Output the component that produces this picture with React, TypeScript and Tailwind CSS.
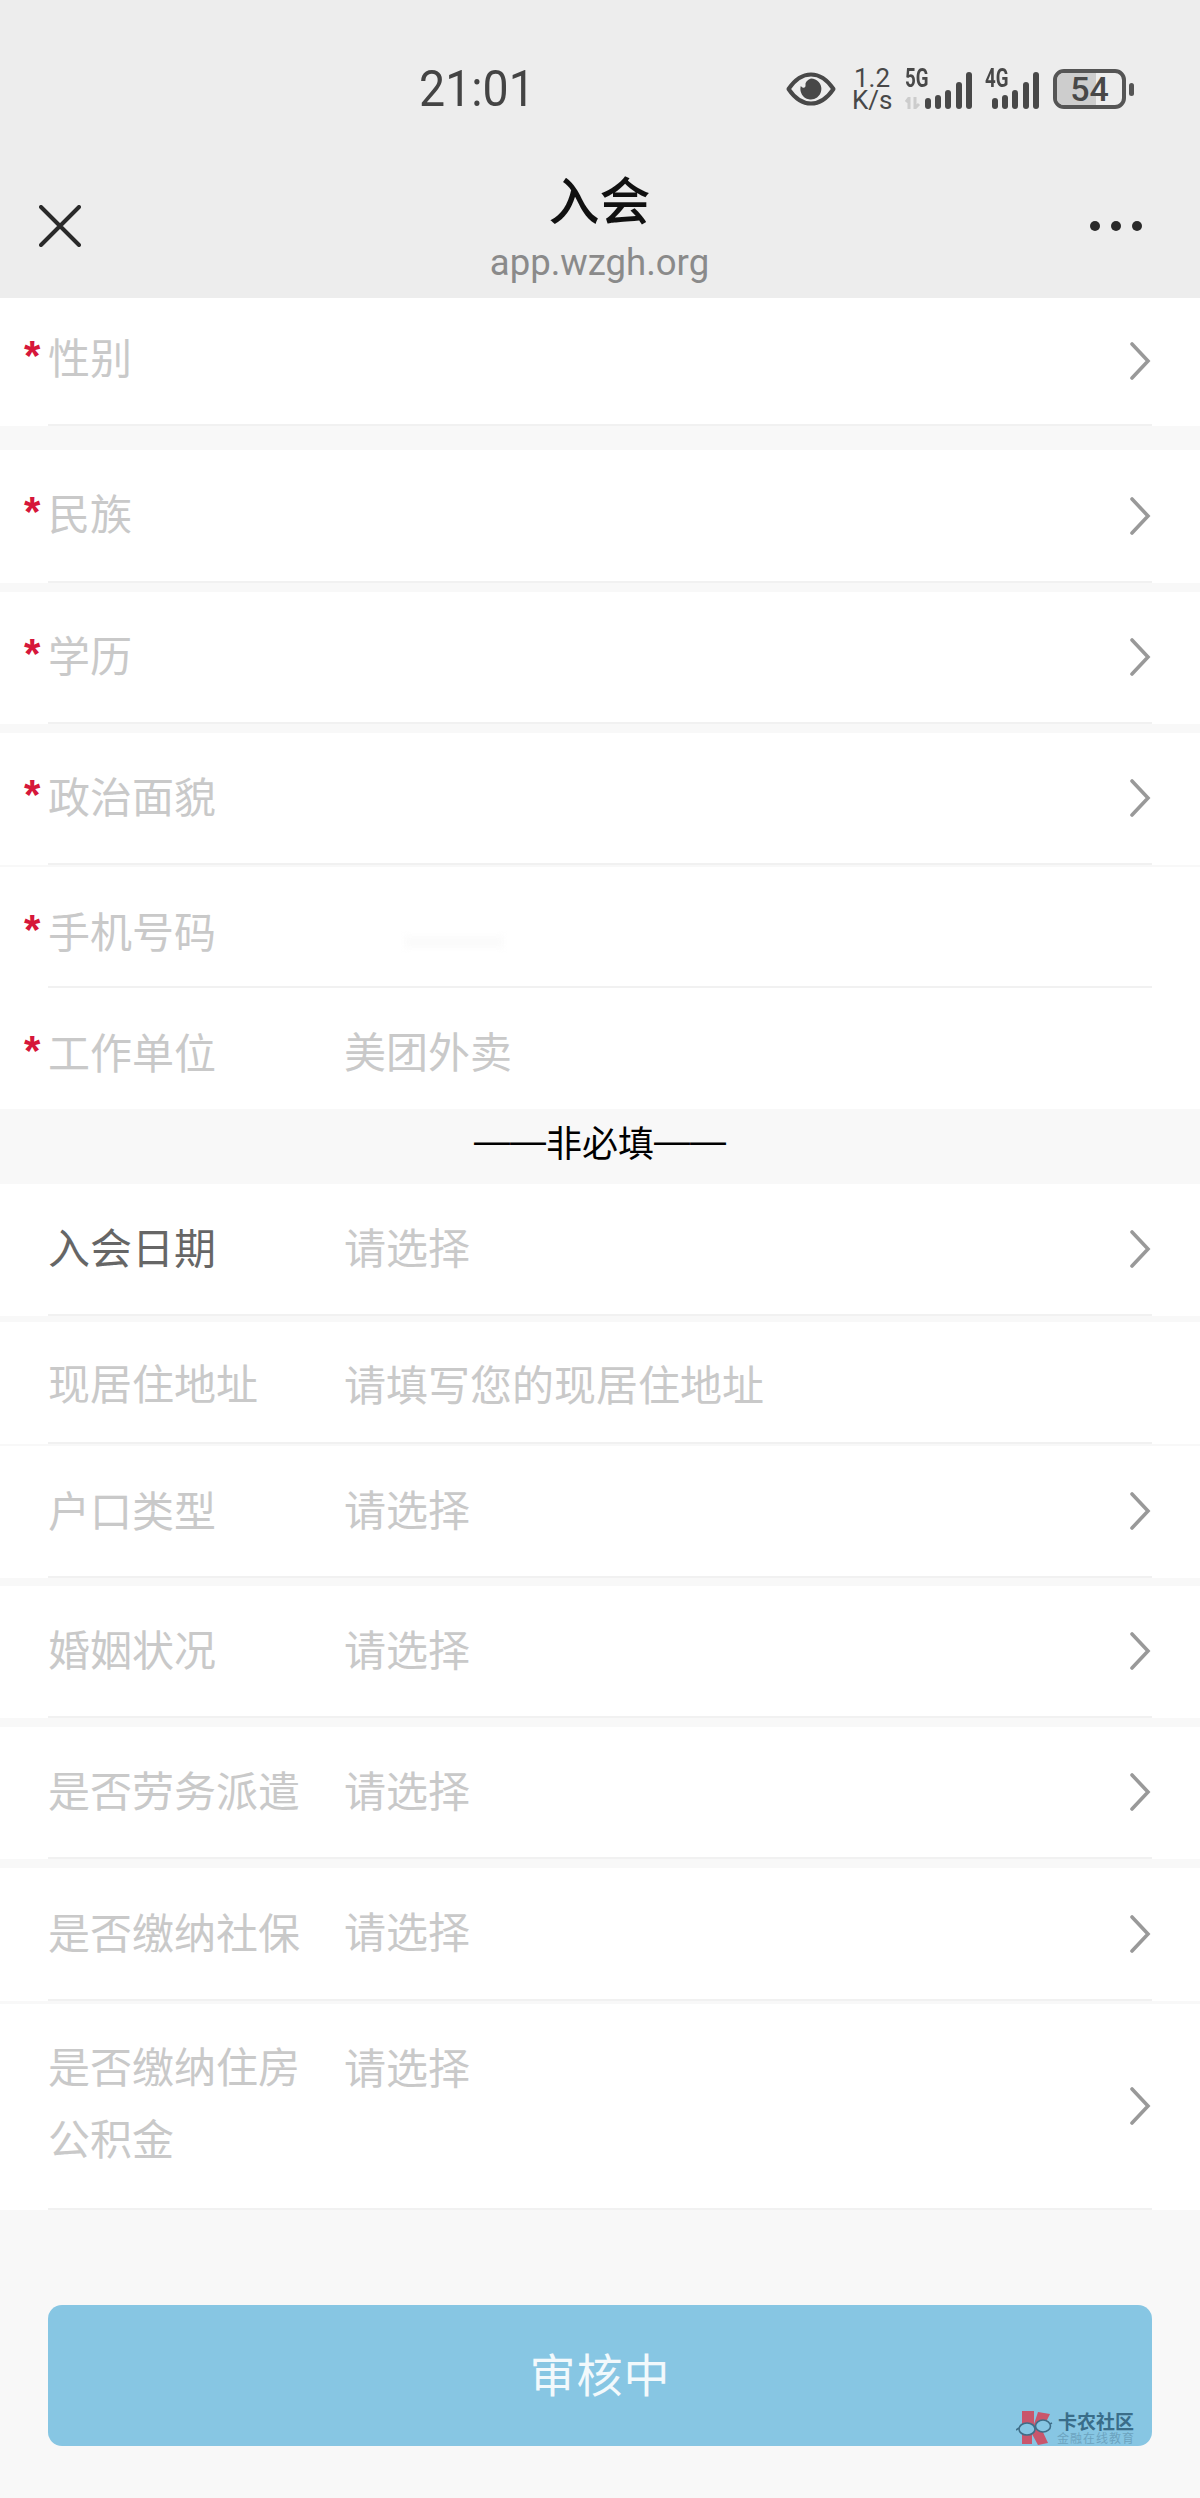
import React from "react";

const CJK = "font-['Noto_Sans_CJK_SC','Noto_Sans',sans-serif]";

function Chevron() {
  return (
    <svg width="22" height="38" viewBox="0 0 22 38" className="ml-auto shrink-0" fill="none">
      <path d="M3 2 L19 19 L3 36" stroke="#999999" strokeWidth="3.6" strokeLinecap="round" strokeLinejoin="miter" />
    </svg>
  );
}

type RowProps = {
  label: React.ReactNode;
  value?: string;
  valueTop?: string;
  req?: boolean;
  chevron?: boolean;
  h: string;
  shift: string;
  gap?: string;
  line?: boolean;
  dark?: boolean;
  smudge?: boolean;
};

function Row({ label, value, valueTop, req, chevron, h, shift, gap, line = true, dark, smudge }: RowProps) {
  return (
    <div className={`bg-white ${gap ?? ""}`}>
      <div className={`flex items-center pr-[49px] ${h}`}>
        <div className="w-[48px] shrink-0 self-stretch flex items-center">
          {req && (
            <span className={`ml-[24px] block text-[#d6173a] text-[42px] font-bold leading-[72px] font-['Liberation_Sans',sans-serif] ${shift}`}>
              *
            </span>
          )}
        </div>
        <div className={`w-[298px] shrink-0 text-[42px] leading-[72px] -mr-[2px] ${shift} ${dark ? "text-[#666666]" : "text-[#c9c9c9]"}`}>
          {label}
        </div>
        {value && <div className={`self-start text-[42px] leading-[72px] text-[#c9c9c9] ${valueTop ?? "mt-[26px]"}`}>{value}</div>}
        {smudge && <div className="mt-[30px] ml-[60px] w-[100px] h-[12px] bg-[#fbfbfb] blur-[3px]" />}
        {chevron && <Chevron />}
      </div>
      {line ? <div className="mx-[48px] h-[2px] bg-[#f1f1f1]" /> : null}
    </div>
  );
}

function Bars() {
  const xs = [3, 13, 23, 34, 44];
  const tops = [26, 23, 18, 10, 0];
  return (
    <svg width="47" height="37" viewBox="0 0 47 37" className="shrink-0">
      {xs.map((x, i) => (
        <rect key={i} x={x - 3} y={tops[i]} width="6" height={37 - tops[i]} rx="3" fill="#484848" />
      ))}
    </svg>
  );
}

function StatusIcons() {
  return (
    <div className="ml-auto flex items-center text-[#484848] font-['Roboto',sans-serif]">
      <svg width="50" height="34" viewBox="0 0 50 34" className="shrink-0" fill="none">
        <path d="M2.5 17 C10 6 17 2.5 25 2.5 C33 2.5 40 6 47.5 17 C40 28 33 31.5 25 31.5 C17 31.5 10 28 2.5 17 Z" stroke="#484848" strokeWidth="4" strokeLinejoin="round" />
        <path d="M25 6.5 A10.5 10.5 0 1 1 14.8 14 C17 17 20 16 19.5 12.5 C19.3 10 22 7.5 25 6.5 Z" fill="#484848" />
      </svg>
      <div className="ml-[16px] w-[40px] text-center text-[26px] leading-[22px]">
        <div>1.2</div>
        <div>K/s</div>
      </div>
      <div className="ml-[13px] relative w-[67px] h-[40px] flex items-end justify-end">
        <span className="absolute left-0 top-[-3px] text-[26px] leading-[24px] font-bold scale-x-[0.72] origin-left">5G</span>
        <svg width="18" height="12" viewBox="0 0 18 12" className="absolute left-0 bottom-0">
          <path d="M4 12 V1 L1 5 M10 0 V11 L14 7" stroke="#cccccc" strokeWidth="3" fill="none" />
        </svg>
        <Bars />
      </div>
      <div className="ml-[13px] relative w-[54px] h-[40px] flex items-end justify-end">
        <span className="absolute left-0 top-[-3px] text-[26px] leading-[24px] font-bold scale-x-[0.72] origin-left">4G</span>
        <Bars />
      </div>
      <div className="ml-[14px] relative w-[73px] h-[40px] rounded-[11px] border-[4px] border-[#555555] overflow-hidden flex items-center justify-center">
        <div className="absolute left-0 top-0 bottom-0 w-[39px] bg-[#cdcdcd]" />
        <span className="relative text-[34px] leading-none font-medium text-[#484848]">54</span>
      </div>
      <div className="ml-[3px] w-[5px] h-[13px] rounded-[3px] bg-[#555555]" />
    </div>
  );
}

function Logo() {
  return (
    <svg width="38" height="36" viewBox="0 0 38 36" className="shrink-0">
      <path d="M6 1 H18 V14 L22 2 L34 4 L26 20 L32 33 L22 35 L16 24 V34 H6 Z" fill="#c9566c" />
      <ellipse cx="11" cy="19" rx="8" ry="6" fill="#87c6e3" stroke="#3f6e88" strokeWidth="1.6" />
      <ellipse cx="27" cy="16" rx="7.5" ry="6" fill="#87c6e3" stroke="#3f6e88" strokeWidth="1.6" />
      <path d="M18 18 L20 17 M3 18 L0 20 M34 14 L36 13" stroke="#3f6e88" strokeWidth="1.6" />
    </svg>
  );
}

export default function App() {
  return (
    <div className={`w-[1200px] h-[2498px] bg-[#f8f8f8] overflow-hidden ${CJK}`}>
      <header className="h-[298px] bg-[#ededed]">
        <div className="h-[168px] pt-[10px] pr-[66px] pl-[419px] flex items-center">
          <div className="text-[50px] leading-none text-[#444444] font-['Roboto',sans-serif] scale-x-[0.93] origin-left">21:01</div>
          <StatusIcons />
        </div>
        <div className="h-[130px] pl-[39px] pr-[40px] grid grid-cols-[1fr_auto_1fr]">
          <svg width="42" height="42" viewBox="0 0 42 42" className="mt-[37px]" fill="none">
            <path d="M2 2 L40 40 M40 2 L2 40" stroke="#2a2a2a" strokeWidth="4" strokeLinecap="round" />
          </svg>
          <div className="text-center">
            <div className="text-[51px] leading-[60px] font-medium text-[#111111]">入会</div>
            <div className="mt-[13px] text-[36.5px] leading-[44px] text-[#8a8a8a] font-['Roboto',sans-serif]">app.wzgh.org</div>
          </div>
          <div className="justify-self-end mr-[18px] mt-[53px] h-[10px] flex gap-[11px]">
            <span className="w-[10px] h-[10px] rounded-full bg-[#2a2a2a]" />
            <span className="w-[10px] h-[10px] rounded-full bg-[#2a2a2a]" />
            <span className="w-[10px] h-[10px] rounded-full bg-[#2a2a2a]" />
          </div>
        </div>
      </header>

      <Row req chevron label="性别" h="h-[126px]" shift="mb-[10px]" gap="mb-[24px]" />
      <Row req chevron label="民族" h="h-[131px]" shift="mb-[7px]" gap="mb-[9px]" />
      <Row req chevron label="学历" h="h-[130px]" shift="mb-[7px]" gap="mb-[9px]" />
      <Row req chevron label="政治面貌" h="h-[130px]" shift="mb-[7px]" gap="mb-[2px]" />
      <Row req label="手机号码" h="h-[119px]" shift="mt-[7px]" smudge />
      <Row req label="工作单位" value="美团外卖" valueTop="mt-[26px]" h="h-[121px]" shift="mt-[5px]" line={false} />

      <div className="h-[75px] pb-[11px] flex items-center justify-center text-[36px] leading-none text-black">
        <span className="font-['Liberation_Sans',sans-serif]">——</span>非必填<span className="font-['Liberation_Sans',sans-serif]">——</span>
      </div>

      <Row dark chevron label="入会日期" value="请选择" h="h-[130px]" shift="mb-[7px]" gap="mb-[6px]" />
      <Row label="现居住地址" value="请填写您的现居住地址" valueTop="mt-[25px]" h="h-[120px]" shift="mb-[0px]" gap="mb-[2px]" />
      <Row chevron label="户口类型" value="请选择" h="h-[130px]" shift="mb-[5px]" gap="mb-[8px]" />
      <Row chevron label="婚姻状况" value="请选择" h="h-[130px]" shift="mb-[6px]" gap="mb-[9px]" />
      <Row chevron label="是否劳务派遣" value="请选择" h="h-[130px]" shift="mb-[6px]" gap="mb-[9px]" />
      <Row chevron label="是否缴纳社保" value="请选择" h="h-[131px]" shift="mb-[5px]" gap="mb-[3px]" />
      <Row
        chevron
        label={<>是否缴纳住房<br />公积金</>}
        value="请选择"
        valueTop="mt-[26px]"
        h="h-[204px]"
        shift="mb-[10px]"
      />

      <div className="mt-[95px] mx-[48px] h-[141px] pb-[8px] rounded-[14px] bg-[#87c6e3] relative flex items-center justify-center">
        <span className="text-[46px] leading-none tracking-[1px] text-[#f2f9fc]">审核中</span>
        <div className="absolute right-[16px] bottom-0 flex items-center gap-[2px]">
          <Logo />
          <div className="w-[80px] text-center pb-[1px]">
            <div className="text-[19px] leading-[20px] font-bold text-[#3a6d89]">卡农社区</div>
            <div className="text-[12px] leading-[14px] tracking-[1px] text-[#6ca3bf]">金融在线教育</div>
          </div>
        </div>
      </div>
    </div>
  );
}
